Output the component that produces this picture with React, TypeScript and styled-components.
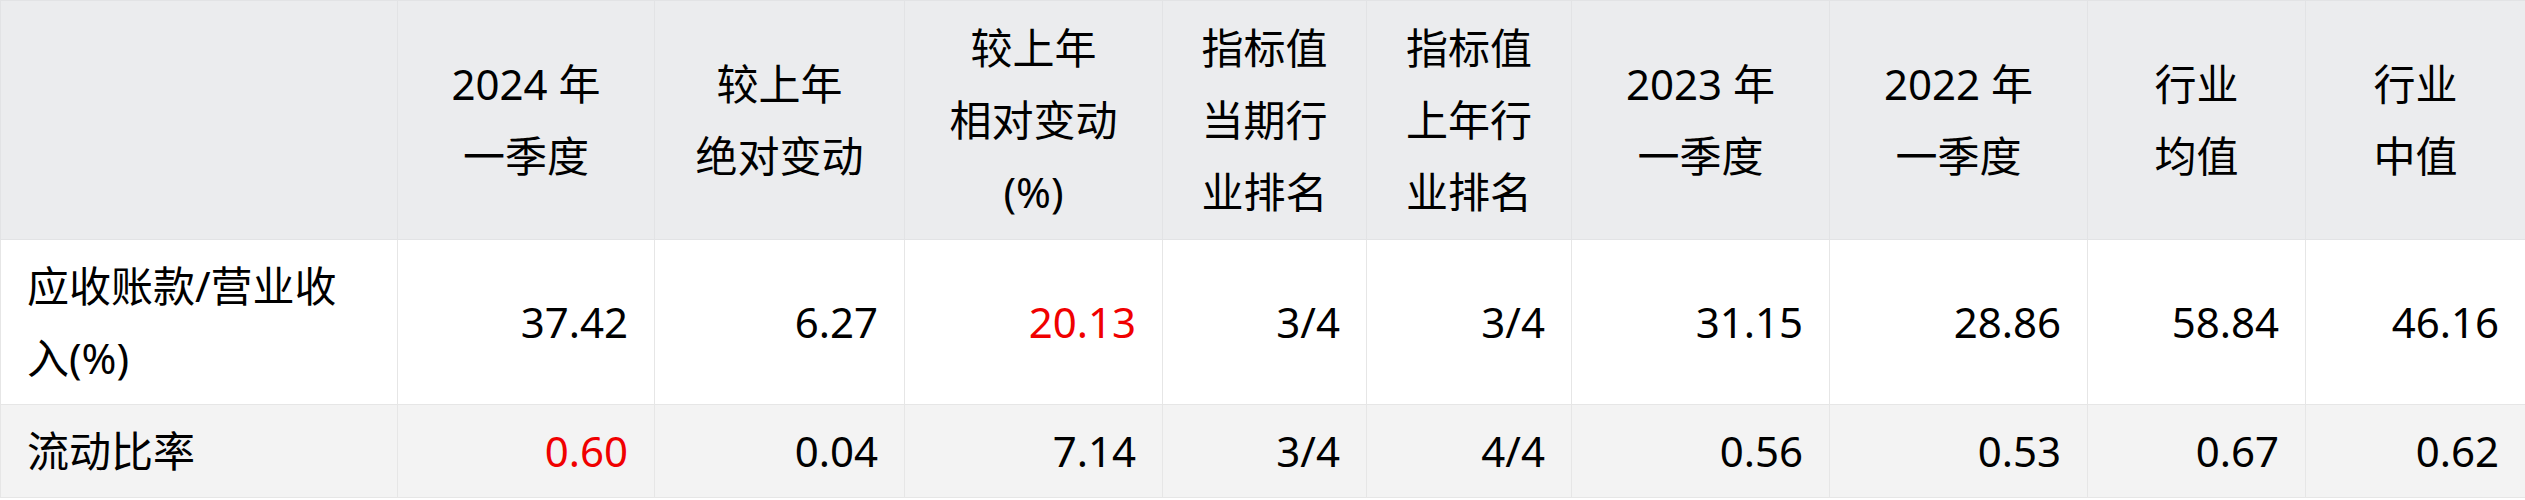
import { Fragment } from "react";
import styled, { createGlobalStyle } from "styled-components";

const Global = createGlobalStyle`
  html, body {
    margin: 0;
    padding: 0;
    background: #ffffff;
  }
  body {
    font-family: "Noto Sans", "Noto Sans CJK SC", sans-serif;
    color: #000;
  }
`;

const Table = styled.table`
  width: 2525px;
  table-layout: fixed;
  border-collapse: collapse;
  font-size: 42px;
  line-height: 72px;
`;

const Th = styled.th`
  background: #ebecee;
  border: 1px solid #e2e3e5;
  font-weight: 400;
  text-align: center;
  vertical-align: middle;
  padding: 11px 20px;
  height: 216px;
`;

const Row = styled.tr<{ $striped?: boolean }>`
  background: ${(p) => (p.$striped ? "#f3f3f3" : "#ffffff")};
`;

const Td = styled.td<{ $label?: boolean; $red?: boolean }>`
  border: 1px solid #e6e6e6;
  padding: 10px 26px 10px 26px;
  text-align: ${(p) => (p.$label ? "left" : "right")};
  color: ${(p) => (p.$red ? "#f00000" : "#000")};
  vertical-align: middle;
`;

const widths = [397, 257, 250, 258, 204, 205, 258, 258, 218, 220];

const heads = [
  [],
  ["2024 年", "一季度"],
  ["较上年", "绝对变动"],
  ["较上年", "相对变动", "(%)"],
  ["指标值", "当期行", "业排名"],
  ["指标值", "上年行", "业排名"],
  ["2023 年", "一季度"],
  ["2022 年", "一季度"],
  ["行业", "均值"],
  ["行业", "中值"],
];

type Cell = { v: string; red?: boolean };

const rows: { label: string[]; cells: Cell[] }[] = [
  {
    label: ["应收账款/营业收", "入(%)"],
    cells: [
      { v: "37.42" },
      { v: "6.27" },
      { v: "20.13", red: true },
      { v: "3/4" },
      { v: "3/4" },
      { v: "31.15" },
      { v: "28.86" },
      { v: "58.84" },
      { v: "46.16" },
    ],
  },
  {
    label: ["流动比率"],
    cells: [
      { v: "0.60", red: true },
      { v: "0.04" },
      { v: "7.14" },
      { v: "3/4" },
      { v: "4/4" },
      { v: "0.56" },
      { v: "0.53" },
      { v: "0.67" },
      { v: "0.62" },
    ],
  },
];

function Lines({ parts }: { parts: string[] }) {
  return (
    <>
      {parts.map((p, i) => (
        <Fragment key={i}>
          {i > 0 && <br />}
          {p}
        </Fragment>
      ))}
    </>
  );
}

export default function App() {
  return (
    <>
      <Global />
      <Table>
        <colgroup>
          {widths.map((w, i) => (
            <col key={i} style={{ width: w }} />
          ))}
        </colgroup>
        <thead>
          <tr>
            {heads.map((h, i) => (
              <Th key={i}>
                <Lines parts={h} />
              </Th>
            ))}
          </tr>
        </thead>
        <tbody>
          {rows.map((r, i) => (
            <Row key={i} $striped={i % 2 === 1}>
              <Td $label>
                <Lines parts={r.label} />
              </Td>
              {r.cells.map((c, j) => (
                <Td key={j} $red={c.red}>
                  {c.v}
                </Td>
              ))}
            </Row>
          ))}
        </tbody>
      </Table>
    </>
  );
}
